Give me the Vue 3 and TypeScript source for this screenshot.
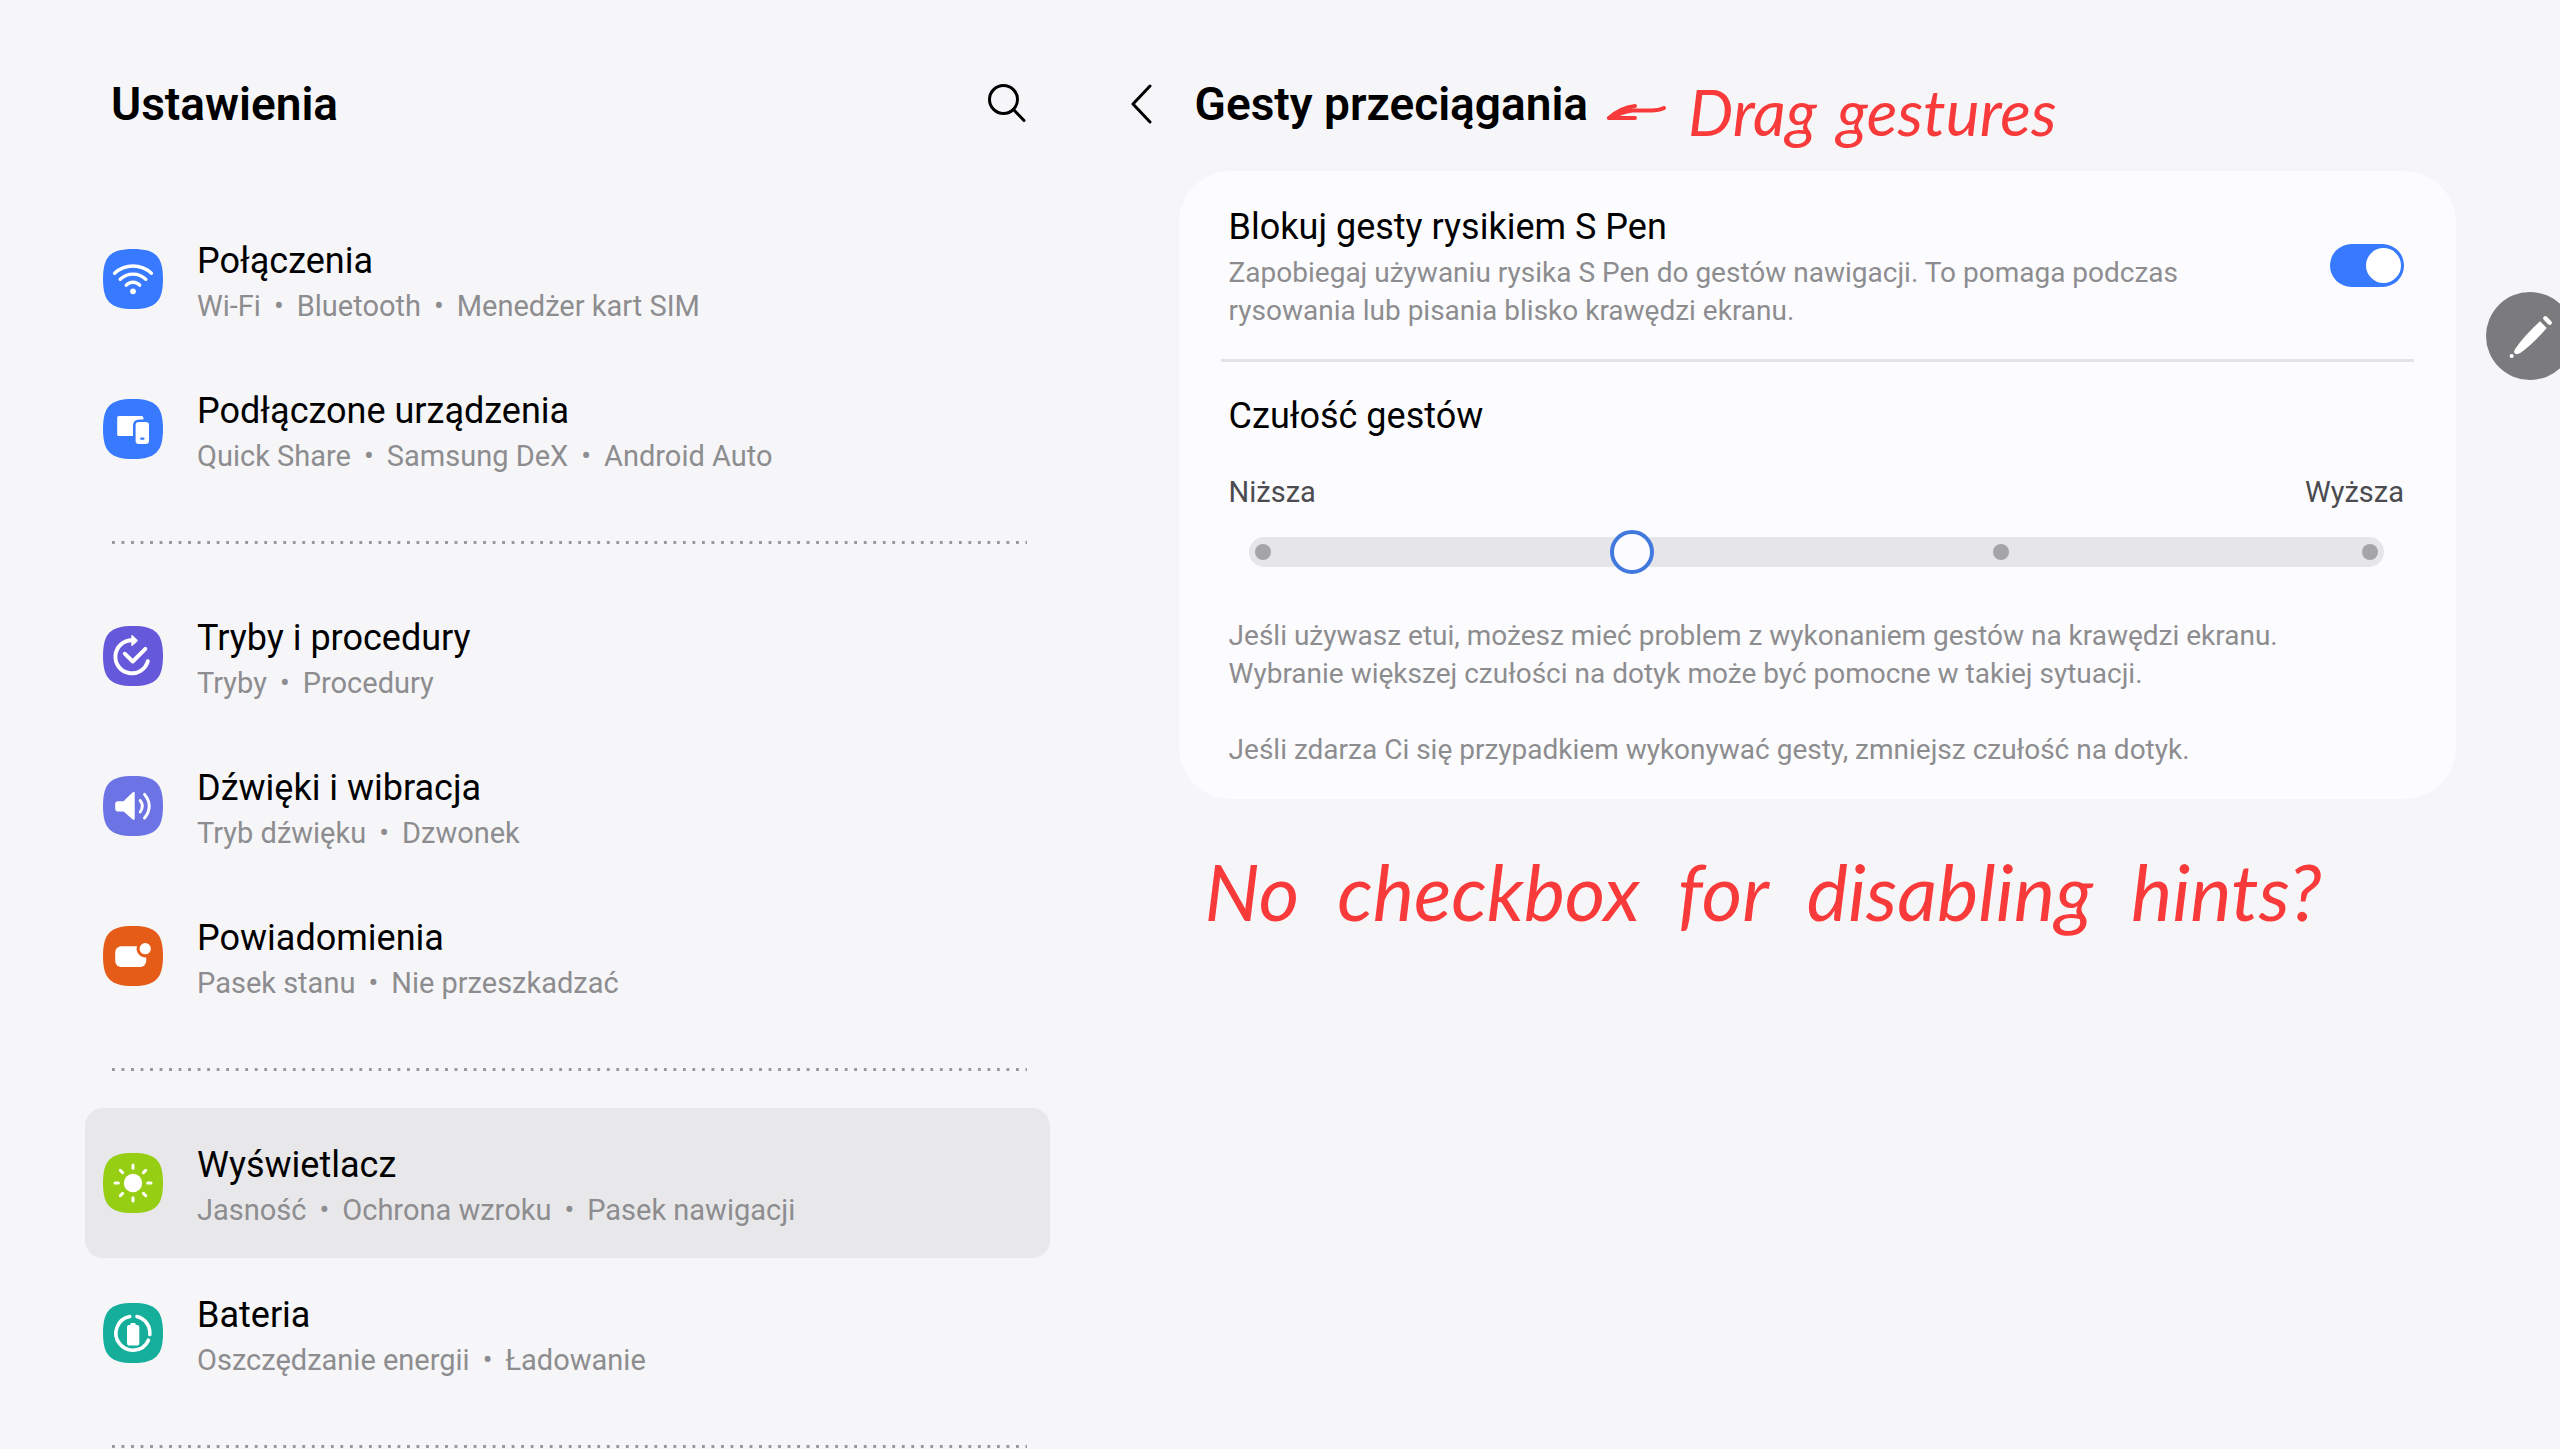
<script setup lang="ts">
import { ref } from 'vue'

type IconName = 'wifi' | 'devices' | 'modes' | 'sound' | 'notifications' | 'display' | 'battery'

interface Item {
  icon: IconName
  color: string
  title: string
  details: string[]
}

const groups: Item[][] = [
  [
    { icon: 'wifi', color: '#387aff', title: 'Połączenia', details: ['Wi-Fi', 'Bluetooth', 'Menedżer kart SIM'] },
    { icon: 'devices', color: '#387aff', title: 'Podłączone urządzenia', details: ['Quick Share', 'Samsung DeX', 'Android Auto'] },
  ],
  [
    { icon: 'modes', color: '#6558db', title: 'Tryby i procedury', details: ['Tryby', 'Procedury'] },
    { icon: 'sound', color: '#6c73e4', title: 'Dźwięki i wibracja', details: ['Tryb dźwięku', 'Dzwonek'] },
    { icon: 'notifications', color: '#e55c19', title: 'Powiadomienia', details: ['Pasek stanu', 'Nie przeszkadzać'] },
  ],
  [
    { icon: 'display', color: '#96ce13', title: 'Wyświetlacz', details: ['Jasność', 'Ochrona wzroku', 'Pasek nawigacji'] },
    { icon: 'battery', color: '#15ae9b', title: 'Bateria', details: ['Oszczędzanie energii', 'Ładowanie'] },
  ],
]

const rays = [0, 45, 90, 135, 180, 225, 270, 315]
const selected = ref('Wyświetlacz')
const blockPen = ref(true)
const sensitivity = ref(1)
</script>

<template>
  <div class="settings">
    <aside class="sidebar">
      <header class="bar">
        <h1>Ustawienia</h1>
        <button class="icon-button" type="button" aria-label="Szukaj">
          <svg width="40" height="40" viewBox="0 0 40 40" fill="none" stroke="#000" stroke-width="3" stroke-linecap="round">
            <circle cx="17.500" cy="15.500" r="14" />
            <path d="M27.500 25.500 38 36.500" />
          </svg>
        </button>
      </header>

      <nav>
        <div v-for="(group, g) in groups" :key="g" class="group">
          <a
            v-for="item in group"
            :key="item.title"
            href="#"
            class="row"
            :class="{ active: item.title === selected }"
            @click.prevent="selected = item.title"
          >
            <svg class="badge" viewBox="0 0 60 60" fill="none" stroke-linecap="round" stroke-linejoin="round">
              <path :fill="item.color" d="M0 30C0 7.500 7.500 0 30 0S60 7.500 60 30 52.500 60 30 60 0 52.500 0 30Z" />
              <g v-if="item.icon === 'wifi'" stroke="#fff" stroke-width="3.400">
                <path d="M11.600 24.300A27 27 0 0 1 48.400 24.300M17.200 30.300A18.300 18.300 0 0 1 42.800 30.300M23.300 36.200A9 9 0 0 1 36.700 36.200" />
                <circle cx="30" cy="42.300" r="2.900" fill="#fff" stroke="none" />
              </g>
              <g v-else-if="item.icon === 'devices'">
                <path fill="#fff" d="M15.700 17H38.500Q40.300 17 40.400 18.800L40.500 20.500H36.500Q30 20.500 30 26.500V37H15.700Q14.200 37 14.200 35.500V18.500Q14.200 17 15.700 17Z" />
                <rect x="32.600" y="23" width="13.400" height="22" rx="3.200" fill="#fff" />
                <path d="M38.200 39.700H40.500" :stroke="item.color" stroke-width="2.200" />
              </g>
              <g v-else-if="item.icon === 'modes'" stroke="#fff" stroke-width="3.900">
                <path d="M29 14.300A16.500 16.500 0 1 0 44.800 35.200M21.800 27.700 29.700 35.500 42.400 22.800" />
                <path d="M29 9.700V19.300L34 14.600Z" fill="#fff" stroke-width="1.500" />
              </g>
              <g v-else-if="item.icon === 'sound'">
                <path fill="#fff" d="M15 25.300H20.500L29.500 16.500Q31.700 14.800 31.700 17V42.500Q31.700 45 29.500 43.200L20.500 35.500H15Q12.200 35.500 12.200 32.500V28.300Q12.200 25.300 15 25.300Z" />
                <path stroke="#fff" stroke-width="2.900" d="M37.200 24.500Q41.500 30 37.200 36M41.500 18.300Q51 30 41.500 42" />
              </g>
              <g v-else-if="item.icon === 'notifications'">
                <rect x="12.200" y="20.200" width="31" height="20.800" rx="6" fill="#fff" />
                <circle cx="42.200" cy="22.700" r="8.700" :fill="item.color" />
                <circle cx="42.200" cy="22.700" r="5.600" fill="#fff" />
              </g>
              <g v-else-if="item.icon === 'display'">
                <circle cx="30" cy="30" r="9.200" fill="#fff" />
                <path v-for="r in rays" :key="r" d="M30 12V15.300" stroke="#fff" stroke-width="3" :transform="`rotate(${r} 30 30)`" />
              </g>
              <g v-else>
                <path stroke="#fff" stroke-width="3.600" d="M26.700 13.500A17 17 0 1 0 45.400 37.200M34 13.500A17 17 0 0 1 46.800 31.500" />
                <path fill="#fff" d="M28.300 20H31.700Q32.700 20 32.700 22H34.300Q36.300 22 36.300 24.200V40.300Q36.300 42.500 34.300 42.500H26Q24 42.500 24 40.300V24.200Q24 22 26 22H27.300Q27.300 20 28.300 20Z" />
              </g>
            </svg>
            <span class="label">
              <span class="title">{{ item.title }}</span>
              <span class="details">
                <span v-for="detail in item.details" :key="detail">{{ detail }}</span>
              </span>
            </span>
          </a>
        </div>
      </nav>
    </aside>

    <main class="content">
      <header class="bar">
        <button class="icon-button" type="button" aria-label="Wstecz">
          <svg width="22" height="40" viewBox="0 0 22 40" fill="none" stroke="#000" stroke-width="3" stroke-linecap="round" stroke-linejoin="round">
            <path d="M19 2 2 20 19 38" />
          </svg>
        </button>
        <h2>Gesty przeciągania</h2>
        <p class="ink ink-small">
          <svg width="62" height="18" viewBox="0 0 62 18" fill="none" stroke="#f93a3a" stroke-width="4" stroke-linecap="round" stroke-linejoin="round">
            <path d="M58 5Q52 8 43 7.500H26Q20 8 3 15H29" />
            <path d="M29 3Q14 5 3 15" />
          </svg>
          <span>Drag</span>
          <span>gestures</span>
        </p>
      </header>

      <section class="card">
        <div class="option">
          <label for="block-pen">
            <span class="title">Blokuj gesty rysikiem S Pen</span>
            <span class="text">Zapobiegaj używaniu rysika S Pen do gestów nawigacji. To pomaga podczas rysowania lub pisania blisko krawędzi ekranu.</span>
          </label>
          <input id="block-pen" v-model="blockPen" class="switch" type="checkbox" role="switch" />
        </div>
        <hr />
        <div class="sensitivity">
          <label class="title" for="sensitivity">Czułość gestów</label>
          <div class="scale"><span>Niższa</span><span>Wyższa</span></div>
          <div class="slider">
            <div class="track"><i v-for="n in 4" :key="n"></i></div>
            <input id="sensitivity" v-model.number="sensitivity" type="range" min="0" max="3" step="1" />
          </div>
          <p class="text">Jeśli używasz etui, możesz mieć problem z wykonaniem gestów na krawędzi ekranu.<br />Wybranie większej czułości na dotyk może być pomocne w takiej sytuacji.</p>
          <p class="text">Jeśli zdarza Ci się przypadkiem wykonywać gesty, zmniejsz czułość na dotyk.</p>
        </div>
      </section>

      <p class="ink ink-large">
        <span>No</span>
        <span>checkbox</span>
        <span>for</span>
        <span>disabling</span>
        <span>hints?</span>
      </p>
    </main>

    <button class="pen" type="button" aria-label="S Pen">
      <svg viewBox="0 0 88 88" fill="#fff">
        <path d="M54 29.300 60.700 36Q47 52 35 60.500 31.500 63 29 61.700 27 60 29.500 56.500 38 44 54 29.300Z" />
        <circle cx="25.700" cy="64" r="2.100" />
        <path d="M59.300 26.300 63.700 30.700" stroke="#fff" stroke-width="4.400" stroke-linecap="round" />
      </svg>
    </button>
  </div>
</template>

<style>
body {
  background: #f6f6f8;
}
</style>

<style scoped>
.settings {
  position: relative;
  display: grid;
  grid-template-columns: 41fr 59fr;
  height: 100vh;
  overflow: hidden;
  color: #000;
  font-family: Roboto, "Noto Sans", sans-serif;
}

.settings * {
  box-sizing: border-box;
}

h1,
h2,
p {
  margin: 0;
}

h1,
h2 {
  font-size: 46px;
  line-height: 56px;
  font-weight: 600;
  white-space: nowrap;
}

button {
  padding: 0;
  border: 0;
  background: none;
}

.icon-button {
  display: flex;
}

.bar {
  display: flex;
  align-items: center;
  height: 171px;
  padding-top: 36px;
}

.sidebar {
  min-width: 0;
  padding-left: 85px;
}

.sidebar .bar {
  justify-content: space-between;
  height: 204px;
  padding: 36px 24px 33px 26px;
}

.row {
  display: flex;
  align-items: center;
  gap: 34px;
  height: 150px;
  padding-left: 18px;
  border-radius: 18px;
  color: inherit;
  text-decoration: none;
}

.row.active {
  background: #e8e8ea;
}

.badge {
  flex: none;
  width: 60px;
  height: 60px;
}

.group::after {
  content: "";
  display: block;
  height: 77px;
  margin: 0 23px 0 27px;
  background: linear-gradient(90deg, #98989b 3px, transparent 3px) 0 37px / calc(100% / 96) 3px repeat-x;
}

.label,
.option label {
  display: flex;
  flex-direction: column;
}

.title {
  display: block;
  font-size: 36px;
  line-height: 54px;
}

.details {
  color: #8d8d90;
  font-size: 29px;
  line-height: 36px;
}

.details span + span::before {
  content: "•";
  margin: 0 13px;
}

.text {
  color: #8d8d90;
  font-size: 28px;
  line-height: 38px;
}

.content {
  min-width: 0;
  padding: 0 104px 0 81px;
}

.content h2 {
  margin-left: 42px;
}

.card {
  margin-left: 48px;
  padding: 29px 42px 30px;
  border-radius: 52px;
  background: #fcfcfe;
}

.option {
  display: flex;
  align-items: center;
  justify-content: space-between;
  padding: 0 10px 29px 8px;
}

.option label {
  width: 1000px;
  max-width: 85%;
}

hr {
  height: 3px;
  margin: 0;
  border: 0;
  background: #e3e3e5;
}

.switch {
  appearance: none;
  flex: none;
  width: 74px;
  height: 43px;
  margin: 0;
  padding: 4px;
  border-radius: 22px;
  background: #aaaaae;
}

.switch::before {
  content: "";
  display: block;
  width: 35px;
  height: 35px;
  border-radius: 50%;
  background: #fff;
}

.switch:checked {
  background: #387aff;
}

.switch:checked::before {
  margin-left: 32px;
}

.sensitivity {
  padding: 27px 10px 0 8px;
}

.scale {
  display: flex;
  justify-content: space-between;
  margin-top: 30px;
  color: #4b4b50;
  font-size: 29px;
  line-height: 38px;
}

.slider {
  display: grid;
  align-items: center;
  margin: 19px 12px 43px;
}

.slider > * {
  grid-area: 1 / 1;
}

.track {
  display: flex;
  align-items: center;
  justify-content: space-between;
  height: 30px;
  margin: 0 8px;
  padding: 0 6px;
  border-radius: 15px;
  background: #e6e6ea;
}

.track i {
  width: 16px;
  height: 16px;
  border-radius: 50%;
  background: #a5a5a7;
}

.slider input {
  appearance: none;
  width: 100%;
  height: 44px;
  margin: 0;
  background: none;
}

.slider input::-webkit-slider-thumb {
  appearance: none;
  width: 44px;
  height: 44px;
  border: 4px solid #4279dd;
  border-radius: 50%;
  background: #fcfcfe;
}

.text + .text {
  margin-top: 38px;
}

.ink {
  display: flex;
  color: #f93a3a;
  font-family: Lato, sans-serif;
  font-style: italic;
  white-space: nowrap;
}

.ink-small {
  align-items: center;
  gap: 20px;
  margin-left: 18px;
  padding-top: 16px;
  font-size: 64px;
  line-height: 64px;
}

.ink-large {
  gap: 38px;
  margin: 36px 0 0 74px;
  font-size: 78px;
  line-height: 112px;
}

.pen {
  position: absolute;
  top: 292px;
  right: -14px;
  width: 88px;
  height: 88px;
  border-radius: 50%;
  background: #7b7b7d;
}

.pen svg {
  display: block;
}
</style>
